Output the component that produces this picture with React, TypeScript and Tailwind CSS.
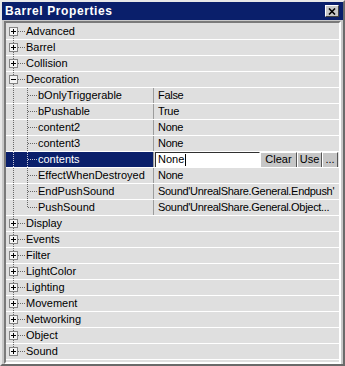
import React from "react";

const font = { fontFamily: '"Liberation Sans", Arial, sans-serif' };

const DOT = "#666666";

const TreeBox = ({ open }: { open: boolean }) => (
  <g>
    <rect x={3.5} y={3.5} width={8} height={8} fill="#f4f4f4" stroke="#848484" />
    <line x1={5} y1={7.5} x2={10} y2={7.5} stroke="#000" />
    {!open && <line x1={7.5} y1={5} x2={7.5} y2={10} stroke="#000" />}
  </g>
);

const TopRow = ({
  label,
  first = false,
  last = false,
  open = false,
}: {
  label: string;
  first?: boolean;
  last?: boolean;
  open?: boolean;
}) => (
  <div className="flex h-[16px] items-center border-b border-white bg-[#dfdfdf]">
    <svg width={20} height={15} className="shrink-0">
      <line
        x1={7.5}
        y1={first ? 8 : 0}
        x2={7.5}
        y2={last ? 8 : 15}
        stroke={DOT}
        strokeDasharray="1 1"
      />
      <line x1={12} y1={7.5} x2={20} y2={7.5} stroke={DOT} strokeDasharray="1 1" />
      <TreeBox open={open} />
    </svg>
    <span className="whitespace-nowrap text-[11px] leading-none text-black">{label}</span>
  </div>
);

const ChildRow = ({
  label,
  value,
  last = false,
  selected = false,
  children,
}: {
  label: string;
  value?: string;
  last?: boolean;
  selected?: boolean;
  children?: React.ReactNode;
}) => {
  const dot = selected ? "#c8c8d8" : DOT;
  return (
    <div className="flex h-[16px] items-stretch border-b border-white bg-[#dfdfdf]">
      <div
        className={`flex w-[147px] shrink-0 items-center ${
          selected ? "bg-[#0a1f6b] text-white" : "text-black"
        }`}
      >
        <svg width={32} height={15} className="shrink-0">
          <line x1={7.5} y1={0} x2={7.5} y2={15} stroke={dot} strokeDasharray="1 1" />
          <line
            x1={21.5}
            y1={0}
            x2={21.5}
            y2={last ? 8 : 15}
            stroke={dot}
            strokeDasharray="1 1"
          />
          <line x1={22} y1={7.5} x2={32} y2={7.5} stroke={dot} strokeDasharray="1 1" />
        </svg>
        <span className="whitespace-nowrap text-[11px] leading-none">{label}</span>
      </div>
      <div className="w-px shrink-0 bg-[#9c9c9c]" />
      <div className="flex min-w-0 flex-1 items-center overflow-hidden pl-[4px]">
        {children ?? (
          <span className="whitespace-nowrap text-[11px] leading-none tracking-[-0.3px] text-black">{value}</span>
        )}
      </div>
    </div>
  );
};

const Btn = ({ label, w }: { label: string; w: string }) => (
  <div
    className={`flex h-[16px] ${w} shrink-0 items-center justify-center border border-b-[#555] border-l-white border-r-[#555] border-t-white bg-[#c6c6c6] text-[11px] leading-none text-black`}
  >
    {label}
  </div>
);

export default function App() {
  const closedTop = ["Display", "Events", "Filter", "LightColor", "Lighting", "Movement", "Networking", "Object", "Sound"];

  return (
    <div
      className="flex h-[366px] w-[345px] flex-col border-2 border-b-[#6a6a6a] border-l-[#e8e8e8] border-r-[#6a6a6a] border-t-[#e8e8e8] bg-[#c8c8c8]"
      style={font}
    >
      {/* title bar */}
      <div className="flex h-[18px] shrink-0 items-center bg-[#0a1f6b] pl-[3px] pr-[4px]">
        <span className="flex-1 text-[12px] font-bold leading-none tracking-[0.6px] text-white">Barrel Properties</span>
        <div className="flex h-[12px] w-[14px] items-center justify-center border border-b-[#404040] border-l-white border-r-[#404040] border-t-white bg-[#c8c8c8]">
          <svg width={8} height={7}>
            <path d="M1 0.5 L7 6.5 M7 0.5 L1 6.5" stroke="#000" strokeWidth={1.6} />
          </svg>
        </div>
      </div>

      {/* property tree */}
      <div className="mx-[2px] mt-[1px] flex flex-1 flex-col border-2 border-b-white border-l-[#7a7a7a] border-r-white border-t-[#7a7a7a] bg-[#dfdfdf] pt-px">
        <TopRow label="Advanced" first />
        <TopRow label="Barrel" />
        <TopRow label="Collision" />
        <TopRow label="Decoration" open />
        <ChildRow label="bOnlyTriggerable" value="False" />
        <ChildRow label="bPushable" value="True" />
        <ChildRow label="content2" value="None" />
        <ChildRow label="content3" value="None" />
        <ChildRow label="contents" selected>
          <div className="-ml-[3px] flex items-center">
            <div className="flex h-[16px] w-[105px] shrink-0 items-center border border-b-white border-l-[#303030] border-r-white border-t-[#303030] bg-white pl-[2px] text-[11px] leading-none text-black">
              None
              <span className="ml-px inline-block h-[12px] w-px bg-black" />
            </div>
            <Btn label="Clear" w="w-[37px]" />
            <Btn label="Use" w="w-[25px]" />
            <Btn label="..." w="w-[16px]" />
          </div>
        </ChildRow>
        <ChildRow label="EffectWhenDestroyed" value="None" />
        <ChildRow label="EndPushSound" value="Sound'UnrealShare.General.Endpush'" />
        <ChildRow label="PushSound" value="Sound'UnrealShare.General.Object..." last />
        {closedTop.map((l, i) => (
          <TopRow key={l} label={l} last={i === closedTop.length - 1} />
        ))}
      </div>
    </div>
  );
}
